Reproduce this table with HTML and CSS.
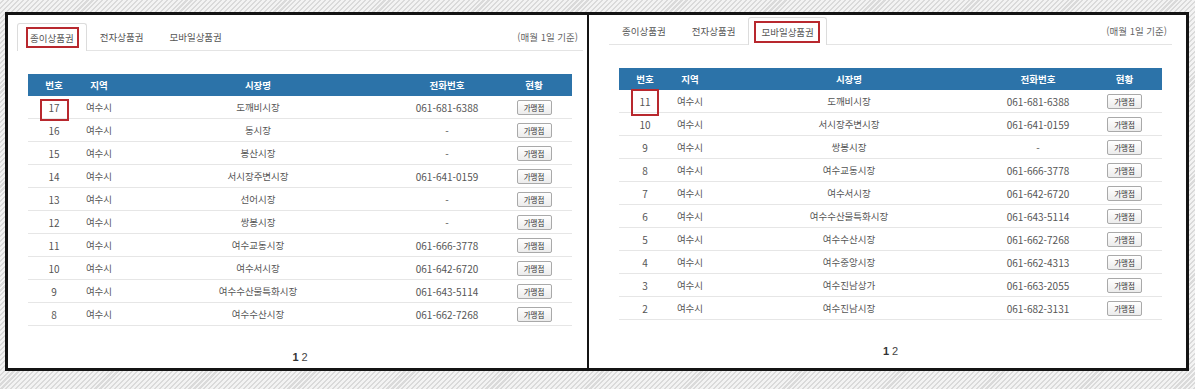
FILE: index.html
```html
<!DOCTYPE html>
<html lang="ko">
<head>
<meta charset="utf-8">
<title>상품권 가맹시장</title>
<link rel="stylesheet" href="styles.css">
</head>
<body>
<div class="frame">
  <section class="panel panel-left">
    <div class="tabbar">
      <div class="tab active"><span class="mark mark-tab-l">종이상품권</span></div>
      <div class="tab">전자상품권</div>
      <div class="tab">모바일상품권</div>
      <div class="note">(매월 1일 기준)</div>
    </div>
    <table class="list">
      <colgroup><col class="c1"><col class="c2"><col class="c3"><col class="c4"><col class="c5"></colgroup>
      <thead><tr><th>번호</th><th>지역</th><th>시장명</th><th>전화번호</th><th>현황</th></tr></thead>
      <tbody>
        <tr><td class="n"><span class="mark mark-num-l">17</span></td><td>여수시</td><td>도깨비시장</td><td class="n">061-681-6388</td><td><span class="btn">가맹점</span></td></tr>
        <tr><td class="n">16</td><td>여수시</td><td>동시장</td><td class="n">-</td><td><span class="btn">가맹점</span></td></tr>
        <tr><td class="n">15</td><td>여수시</td><td>봉산시장</td><td class="n">-</td><td><span class="btn">가맹점</span></td></tr>
        <tr><td class="n">14</td><td>여수시</td><td>서시장주변시장</td><td class="n">061-641-0159</td><td><span class="btn">가맹점</span></td></tr>
        <tr><td class="n">13</td><td>여수시</td><td>선어시장</td><td class="n">-</td><td><span class="btn">가맹점</span></td></tr>
        <tr><td class="n">12</td><td>여수시</td><td>쌍봉시장</td><td class="n">-</td><td><span class="btn">가맹점</span></td></tr>
        <tr><td class="n">11</td><td>여수시</td><td>여수교동시장</td><td class="n">061-666-3778</td><td><span class="btn">가맹점</span></td></tr>
        <tr><td class="n">10</td><td>여수시</td><td>여수서시장</td><td class="n">061-642-6720</td><td><span class="btn">가맹점</span></td></tr>
        <tr><td class="n">9</td><td>여수시</td><td>여수수산물특화시장</td><td class="n">061-643-5114</td><td><span class="btn">가맹점</span></td></tr>
        <tr><td class="n">8</td><td>여수시</td><td>여수수산시장</td><td class="n">061-662-7268</td><td><span class="btn">가맹점</span></td></tr>
      </tbody>
    </table>
    <div class="pager"><b>1</b><span>2</span></div>
  </section>
  <section class="panel panel-right">
    <div class="tabbar">
      <div class="tab">종이상품권</div>
      <div class="tab">전자상품권</div>
      <div class="tab active"><span class="mark mark-tab-r">모바일상품권</span></div>
      <div class="note">(매월 1일 기준)</div>
    </div>
    <table class="list">
      <colgroup><col class="c1"><col class="c2"><col class="c3"><col class="c4"><col class="c5"></colgroup>
      <thead><tr><th>번호</th><th>지역</th><th>시장명</th><th>전화번호</th><th>현황</th></tr></thead>
      <tbody>
        <tr><td class="n"><span class="mark mark-num-r">11</span></td><td>여수시</td><td>도깨비시장</td><td class="n">061-681-6388</td><td><span class="btn">가맹점</span></td></tr>
        <tr><td class="n">10</td><td>여수시</td><td>서시장주변시장</td><td class="n">061-641-0159</td><td><span class="btn">가맹점</span></td></tr>
        <tr><td class="n">9</td><td>여수시</td><td>쌍봉시장</td><td class="n">-</td><td><span class="btn">가맹점</span></td></tr>
        <tr><td class="n">8</td><td>여수시</td><td>여수교동시장</td><td class="n">061-666-3778</td><td><span class="btn">가맹점</span></td></tr>
        <tr><td class="n">7</td><td>여수시</td><td>여수서시장</td><td class="n">061-642-6720</td><td><span class="btn">가맹점</span></td></tr>
        <tr><td class="n">6</td><td>여수시</td><td>여수수산물특화시장</td><td class="n">061-643-5114</td><td><span class="btn">가맹점</span></td></tr>
        <tr><td class="n">5</td><td>여수시</td><td>여수수산시장</td><td class="n">061-662-7268</td><td><span class="btn">가맹점</span></td></tr>
        <tr><td class="n">4</td><td>여수시</td><td>여수중앙시장</td><td class="n">061-662-4313</td><td><span class="btn">가맹점</span></td></tr>
        <tr><td class="n">3</td><td>여수시</td><td>여수진남상가</td><td class="n">061-663-2055</td><td><span class="btn">가맹점</span></td></tr>
        <tr><td class="n">2</td><td>여수시</td><td>여수진남시장</td><td class="n">061-682-3131</td><td><span class="btn">가맹점</span></td></tr>
      </tbody>
    </table>
    <div class="pager"><b>1</b><span>2</span></div>
  </section>
</div>
</body>
</html>
```
FILE: styles.css
```css
html, body {
  margin: 0;
  padding: 0;
}
body {
  width: 1195px;
  height: 389px;
  overflow: hidden;
  background: repeating-linear-gradient(135deg, #f3f3f3 0 2px, #dadada 2px 3.5px);
  font-family: "Noto Sans CJK KR", "Noto Sans", sans-serif;
  color: #555;
  padding: 12px 0 0 5px;
  box-sizing: border-box;
}
.frame {
  display: flex;
  width: 1184px;
  height: 359px;
  box-sizing: border-box;
  border: 3px solid #141414;
  background: #fff;
}
.panel {
  display: flex;
  flex-direction: column;
  box-sizing: border-box;
}
.panel-left {
  width: 579px;
  padding: 8px 4px 0 9px;
}
.panel-right {
  width: 599px;
  border-left: 2px solid #141414;
  padding: 2px 14px 0 20px;
}
.tabbar {
  display: flex;
  align-items: flex-end;
  height: 27px;
  border-bottom: 1px solid #e4e4e4;
}
.tab {
  height: 27px;
  box-sizing: border-box;
  padding: 0 12px;
  display: flex;
  align-items: center;
  font-size: 9.5px;
  line-height: 14px;
  color: #555;
  border: 1px solid transparent;
  border-bottom: none;
}
.tab.active {
  background: #fff;
  border-color: #dcdcdc;
  border-radius: 3px 3px 0 0;
  margin-bottom: -1px;
  height: 28px;
}
.note {
  margin-left: auto;
  align-self: center;
  padding-right: 5px;
  font-size: 9.5px;
  color: #666;
}
.mark {
  position: relative;
  display: inline-block;
  line-height: 14px;
}
.mark::after {
  content: "";
  position: absolute;
  border: 2px solid #b8282e;
}
.mark-tab-l::after { left: -4px; right: -5px; top: -4px; bottom: -3px; }
.mark-tab-r::after { left: -7px; right: -6px; top: -4px; bottom: -4px; }
.mark-num-l::after { left: -8px; right: -9px; top: -2px; bottom: -6px; }
.mark-num-r::after { left: -8px; right: -8px; top: -6px; bottom: -7px; }

.list {
  border-collapse: collapse;
  table-layout: fixed;
  margin: 23px 11px 0;
  width: 544px;
}
.panel-right .list {
  margin: 23px 10px 0;
  width: 543px;
}
.c1 { width: 52px; }
.c2 { width: 38px; }
.c3 { width: 280px; }
.c4 { width: 98px; }
.list th {
  background: #2c73a9;
  color: #fff;
  font-weight: bold;
  font-size: 9.5px;
  height: 22px;
  padding: 0;
  text-align: center;
}
.list td {
  height: 22px;
  padding: 0;
  border-bottom: 1px solid #e6e6e6;
  text-align: center;
  font-size: 9.5px;
  color: #555;
  white-space: nowrap;
}
.list td.n {
  font-size: 10px;
}
.btn {
  display: inline-block;
  width: 35px;
  height: 15px;
  box-sizing: border-box;
  border: 1px solid #a9a9a9;
  border-radius: 2px;
  background: linear-gradient(#ffffff, #ececec);
  font-size: 7.5px;
  line-height: 13px;
  color: #333;
  vertical-align: middle;
}
.pager {
  display: flex;
  justify-content: center;
  gap: 3px;
  margin-top: 24px;
  padding-right: 0;
  font-family: "Liberation Sans", sans-serif;
  font-size: 11px;
  line-height: 14px;
  color: #444;
}
.pager b { color: #333; }
.panel-left .pager { margin-left: 11px; width: 544px; }
.panel-right .pager { margin-left: 10px; width: 543px; }
```
